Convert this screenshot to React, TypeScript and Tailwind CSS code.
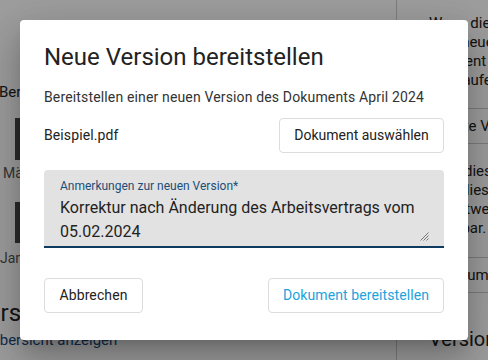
export default function App() {
  return (
    <div className="relative h-[360px] w-[488px] overflow-hidden bg-white font-['Roboto',sans-serif] text-[#222]">
      {/* page behind the dialog */}
      <div className="flex h-full">
        <div className="flex w-[396px] shrink-0 flex-col pt-[82px] whitespace-nowrap">
          <div className="ml-[-1px] text-[15px] leading-[20px]">Bereitstellen</div>
          <div className="ml-[15px] mt-[16px] h-[42px] w-[24px] bg-[#444]" />
          <div className="ml-[3px] mt-[3px] text-[14px] leading-[20px] text-[#555]">März</div>
          <div className="ml-[15px] mt-[19px] h-[41px] w-[24px] bg-[#444]" />
          <div className="ml-0 mt-[5px] text-[14px] leading-[20px] text-[#555]">Januar</div>
          <div className="ml-[-27px] mt-[30px] text-[24px] leading-[30px]">Versionen</div>
          <div className="ml-[-10px] mt-[2px] text-[15px] leading-[20px] text-[#1a4a80]">Übersicht anzeigen</div>
        </div>
        <div className="flex flex-1 flex-col whitespace-nowrap border-l border-[#ccc] text-[15px] leading-[19px]">
          <div className="h-[108px] pl-[32px] pt-[14px]">
            Wenn dieses
            <br />
            Eine neue
            <br />
            kann ent
            <br />
            überlaufen
          </div>
          <div className="flex h-[35px] items-center border-t border-[#ccc] pl-[32px]">Neuste Version</div>
          <div className="h-[114px] border-t border-[#ccc] pl-[32px] pt-[18px]">
            Falls dieses
            <br />
            Weil dieses
            <br />
            ist entweder
            <br />
            sichtbar.
          </div>
          <div className="flex h-[35px] items-center border-t border-[#ccc] pl-[32px]">Zeitraum</div>
          <div className="border-t border-[#ccc] pl-[32px] pt-[33px] text-[20px] leading-[26px]">Versionen</div>
        </div>
      </div>

      {/* backdrop */}
      <div className="absolute inset-0 bg-black/[0.38]" />

      {/* dialog */}
      <div className="absolute left-[20px] top-[20px] flex h-[320px] w-[448px] flex-col rounded-[4px] bg-white px-[24px] pt-[21px] shadow-[0_11px_15px_-7px_rgba(0,0,0,0.2),0_24px_38px_3px_rgba(0,0,0,0.14),0_9px_46px_8px_rgba(0,0,0,0.12)]">
        <h2 className="text-[24px] leading-[32px] text-[#222]">Neue Version bereitstellen</h2>
        <p className="mt-[13px] text-[14px] leading-[22px] tracking-[0.15px] text-[#333]">
          Bereitstellen einer neuen Version des Dokuments April 2024
        </p>
        <div className="mt-[10px] flex items-center justify-between">
          <span className="text-[14px] tracking-[0.1px] text-[#222]">Beispiel.pdf</span>
          <button className="h-[35px] w-[165px] rounded-[4px] border border-[#dcdcdc] bg-white text-[14px] text-[#222]">
            Dokument auswählen
          </button>
        </div>
        <div className="relative mt-[17px] h-[78px] shrink-0 rounded-t-[4px] border-b-2 border-[#0d3a5e] bg-[#e2e2e2] px-[16px] pt-[8px]">
          <div className="text-[12px] leading-[16px] text-[#1b4e78]">Anmerkungen zur neuen Version*</div>
          <div className="mt-[2px] text-[16px] leading-[24px] text-[#222]">
            Korrektur nach Änderung des Arbeitsvertrags vom
            <br />
            05.02.2024
          </div>
          <svg className="absolute bottom-[5px] right-[15px]" width="10" height="10" viewBox="0 0 10 10">
            <path d="M9.5 1.5L1.5 9.5M9.5 4.5L4.5 9.5M9.5 7.5L7.5 9.5" stroke="#777" strokeWidth="1" />
          </svg>
        </div>
        <div className="mt-[30px] flex items-center justify-between">
          <button className="h-[35px] w-[99px] rounded-[4px] border border-[#dcdcdc] bg-white text-[14px] tracking-[0.1px] text-[#222]">
            Abbrechen
          </button>
          <button className="h-[35px] w-[176px] rounded-[4px] border border-[#dcdcdc] bg-white text-[14px] tracking-[0.1px] text-[#1ba3dc]">
            Dokument bereitstellen
          </button>
        </div>
      </div>
    </div>
  );
}
